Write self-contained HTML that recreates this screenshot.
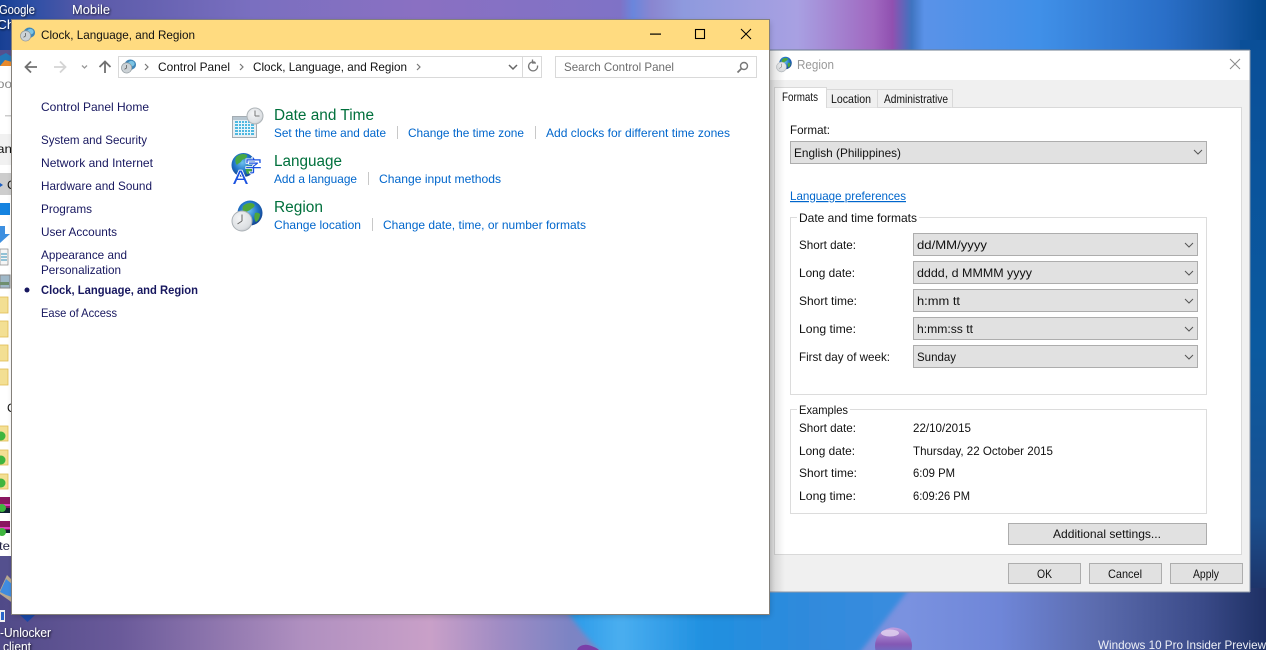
<!DOCTYPE html>
<html lang="en"><head><meta charset="utf-8"><title>Clock, Language, and Region</title>
<style>
html,body{margin:0;padding:0;width:1266px;height:650px;overflow:hidden;background:#35589f}
svg{display:block;position:absolute;left:0;top:0}
text{font-family:"Liberation Sans",Arial,sans-serif;font-size:12px;fill:#111;white-space:pre}
.n{fill:#17175f}
.l{fill:#0066cc}
.h{font-size:15.5px;fill:#00703c}
.d{fill:#fff;font-size:12.5px}
</style></head><body>
<svg width="1266" height="650" viewBox="0 0 1266 650" xmlns="http://www.w3.org/2000/svg">
<defs>
<filter id="b2" x="-20%" y="-20%" width="140%" height="140%"><feGaussianBlur stdDeviation="2.500"/></filter>
<filter id="sh" x="-5%" y="-5%" width="110%" height="110%"><feGaussianBlur stdDeviation="3"/></filter>
<filter id="ts" x="-10%" y="-30%" width="120%" height="160%"><feDropShadow dx="1" dy="1" stdDeviation="1" flood-color="#000" flood-opacity=".8"/></filter>
<linearGradient id="top" x1="0" x2="1" y1="0" y2="0">
<stop offset="0" stop-color="#173f93"/><stop offset=".025" stop-color="#2d4fa5"/><stop offset=".07" stop-color="#5a5aa8"/><stop offset=".2" stop-color="#7a6fc0"/><stop offset=".33" stop-color="#8a70c2"/><stop offset=".49" stop-color="#7f72c6"/><stop offset=".5" stop-color="#6a86dc"/><stop offset=".515" stop-color="#8a86d0"/><stop offset=".54" stop-color="#8e9ade"/><stop offset=".63" stop-color="#a8a0e2"/><stop offset=".69" stop-color="#a068c0"/><stop offset=".705" stop-color="#9050b0"/><stop offset=".72" stop-color="#3f74c0"/><stop offset=".73" stop-color="#5a92e8"/><stop offset=".82" stop-color="#4090e8"/><stop offset=".92" stop-color="#2a6fc8"/><stop offset=".965" stop-color="#1a5aa8"/><stop offset="1" stop-color="#04478c"/>
</linearGradient>
<linearGradient id="bot" x1="0" x2="1" y1="0" y2="0">
<stop offset="0" stop-color="#504a88"/><stop offset=".095" stop-color="#6a5a9a"/><stop offset=".24" stop-color="#b090c0"/><stop offset=".34" stop-color="#c9a0c8"/><stop offset=".395" stop-color="#a08cc4"/><stop offset=".45" stop-color="#7c84c4"/><stop offset=".715" stop-color="#7a92e0"/><stop offset=".79" stop-color="#6f86d8"/><stop offset=".87" stop-color="#5a6aac"/><stop offset=".95" stop-color="#3a4a88"/><stop offset="1" stop-color="#1e3064"/>
</linearGradient>
<linearGradient id="blue" gradientUnits="userSpaceOnUse" x1="570" x2="905" y1="0" y2="0">
<stop offset="0" stop-color="#2a9ae8"/><stop offset=".15" stop-color="#4aaef0"/><stop offset=".4" stop-color="#2090e0"/><stop offset=".7" stop-color="#2f8adc"/><stop offset="1" stop-color="#3a8cdf"/>
</linearGradient>
<linearGradient id="rt" x1="0" x2="0" y1="0" y2="1">
<stop offset="0" stop-color="#0a4f98"/><stop offset=".55" stop-color="#0b5aa0"/><stop offset=".85" stop-color="#1a5090"/><stop offset="1" stop-color="#1e3064"/>
</linearGradient>
<linearGradient id="fade" x1="0" x2="1" y1="0" y2="0"><stop offset="0" stop-color="#000" stop-opacity=".14"/><stop offset="1" stop-color="#000" stop-opacity="0"/></linearGradient>
<radialGradient id="glb" cx=".45" cy=".4" r=".65"><stop offset="0" stop-color="#6fc0ee"/><stop offset=".55" stop-color="#1f74c8"/><stop offset="1" stop-color="#123a86"/></radialGradient>
<radialGradient id="clk" cx=".4" cy=".35" r=".8"><stop offset="0" stop-color="#f4f5f6"/><stop offset=".7" stop-color="#dcdfe2"/><stop offset="1" stop-color="#a8aeb3"/></radialGradient>
<linearGradient id="drop" x1="0" x2="0" y1="0" y2="1"><stop offset="0" stop-color="#c0a0e0"/><stop offset=".45" stop-color="#8458b4"/><stop offset="1" stop-color="#4a8ed8"/></linearGradient>
<symbol id="cp" viewBox="0 0 16 16" overflow="visible">
<ellipse cx="10" cy="6" rx="6" ry="5.500" fill="#3f86b8"/><ellipse cx="11" cy="5" rx="3.500" ry="3" fill="#7cc4e4"/>
<circle cx="6" cy="9.500" r="5.500" fill="#ccd2d6" stroke="#8b959b" stroke-width=".7"/>
<path d="M6 9.500V6.400M6 9.500L3.800 11" stroke="#555" stroke-width=".8" fill="none"/>
</symbol>
<symbol id="reg" viewBox="0 0 32 32" overflow="visible">
<circle cx="19" cy="14" r="12.500" fill="url(#glb)"/>
<path d="M12 7c3-3 8-4 11-2 2 2-1 4-3 5-1 2-5 2-6 4-2 1-3-4-2-7zM24 14c2-1 4 0 5 1 0 4-2 7-4 8-2-2-2-6-1-9z" fill="#4fa63a"/>
<circle cx="11" cy="22" r="10" fill="url(#clk)" stroke="#aab0b5" stroke-width="1"/>
<path d="M11 22v-6.500M11 22l-4.500 3" stroke="#666" stroke-width="1" fill="none"/>
</symbol>
</defs>

<!-- wallpaper -->
<rect x="0" y="0" width="1266" height="54" fill="url(#top)"/>
<rect x="1240" y="40" width="26" height="560" fill="url(#rt)"/>
<rect x="0" y="50" width="20" height="570" fill="#54508e"/>
<rect x="0" y="588" width="1266" height="62" fill="url(#bot)"/>
<path d="M560 588H910L858 655H604Q578 630 560 600z" fill="url(#blue)" filter="url(#b2)"/>
<circle cx="893.500" cy="646" r="18.500" fill="url(#drop)"/>
<ellipse cx="890" cy="633" rx="9" ry="3.500" fill="#e0d0ee" opacity=".85"/>
<path d="M577 650c1-4 7-6 11-5 4 1 9 3 11 5z" fill="#7a3fa8"/>

<!-- desktop text and icons -->
<text class="d" x="-1" y="14" textLength="36" lengthAdjust="spacingAndGlyphs" filter="url(#ts)">Google</text>
<text class="d" x="72" y="14" textLength="38" lengthAdjust="spacingAndGlyphs" filter="url(#ts)">Mobile</text>
<text class="d" x="-3" y="29" textLength="22" lengthAdjust="spacingAndGlyphs" filter="url(#ts)">Chr</text>
<path d="M0 590L7 575l5 5v23L10 601 0 594z" fill="#b8a890"/><path d="M0 592l6-13 6 5v13l-6-2z" fill="#3f8ce0"/>
<path d="M0 610h5v12H0z" fill="#f0f0f0"/><path d="M1 612h3v8H1z" fill="#2a66c8"/>
<path d="M20 615h15l-7.500 7z" fill="#1b48a8"/>
<text class="d" x="0" y="637" textLength="51" lengthAdjust="spacingAndGlyphs" filter="url(#ts)">-Unlocker</text>
<text class="d" x="3" y="651" textLength="28" lengthAdjust="spacingAndGlyphs" filter="url(#ts)">client</text>
<text x="1098" y="649" textLength="168" lengthAdjust="spacingAndGlyphs" style="fill:#eef0f6">Windows 10 Pro Insider Preview</text>

<!-- explorer window behind -->
<rect x="0" y="66" width="12" height="490" fill="#fff"/>
<path d="M0 66V56l6-3 6 4v9z" fill="#2477b8"/><path d="M0 66l5-6 7 2v4z" fill="#e88a2c"/>
<text x="-3" y="88" style="fill:#888" textLength="15" lengthAdjust="spacingAndGlyphs">oo</text>
<rect x="5" y="115" width="7" height="1.500" fill="#ccc"/>
<rect x="0" y="134" width="12" height="31" fill="#f1f1f1"/>
<text x="-3" y="153" textLength="15" lengthAdjust="spacingAndGlyphs">an</text>
<rect x="0" y="173" width="12" height="22" fill="#cdcdcd"/>
<text x="7" y="189">C</text><path d="M0 183l3 2-3 2z" fill="#1f5fc0"/>
<path d="M0 203h10v14H0z" fill="#1583e0"/><path d="M0 215h10v2H0z" fill="#fff"/>
<path d="M0 226h5v8h5l-10 9z" fill="#3d8fe0"/>
<rect x="0" y="249" width="8" height="16" fill="#f5f5f5" stroke="#888" stroke-width=".7"/><path d="M1 254h6M1 257h6M1 260h6" stroke="#2e8fb8"/>
<rect x="0" y="275" width="10" height="13" fill="#9fb8c8" stroke="#888"/><rect x="0" y="282" width="9" height="3" fill="#6f8f6f"/>
<g fill="#f3df93" stroke="#e0bc54" stroke-width=".8">
<rect x="-2" y="297" width="10" height="16"/><rect x="-2" y="321" width="10" height="16"/><rect x="-2" y="345" width="10" height="16"/><rect x="-2" y="369" width="10" height="16"/>
<rect x="-2" y="426" width="10" height="15"/><rect x="-2" y="450" width="10" height="15"/><rect x="-2" y="474" width="10" height="15"/>
</g>
<g fill="#3fb53f"><circle cx="1" cy="436" r="4.500"/><circle cx="1" cy="460" r="4.500"/><circle cx="1" cy="483" r="4.500"/></g>
<text x="7" y="412">C</text>
<g><rect x="0" y="497" width="10" height="16" fill="#8a1660"/><rect x="0" y="504" width="10" height="2" fill="#e040c0"/><rect x="0" y="508" width="10" height="5" fill="#123"/>
<rect x="0" y="521" width="10" height="12" fill="#8a1660"/><rect x="0" y="527" width="10" height="2" fill="#e040c0"/><rect x="0" y="530" width="10" height="3" fill="#123"/>
<circle cx="2" cy="508" r="4" fill="#3fb53f"/><circle cx="2" cy="532" r="4" fill="#3fb53f"/></g>
<text x="-1" y="550" textLength="11" lengthAdjust="spacingAndGlyphs" style="fill:#224">te</text>

<!-- Region dialog -->
<rect x="769" y="50" width="481" height="542" fill="#f0f0f0"/>
<rect x="769" y="50" width="481" height="30" fill="#fff"/>
<rect x="769" y="49.500" width="481" height="1" fill="#6d7c8f"/>
<rect x="1249.500" y="50" width="1" height="542" fill="#8e98a8"/>
<rect x="769" y="591.500" width="481" height="1" fill="#8e98a8"/>
<use href="#reg" x="776" y="56" width="16" height="16"/>
<text x="797" y="69" textLength="37" lengthAdjust="spacingAndGlyphs" style="fill:#999;font-size:12.500px">Region</text>
<path d="M1230 59l10 10M1240 59l-10 10" stroke="#8a8a8a" fill="none"/>
<!-- tabs -->
<rect x="774.500" y="107.500" width="467" height="447" fill="#fff" stroke="#d9d9d9"/>
<path d="M826.500 107.500V89.500H877.500V107.500M877.500 89.500H952.500V107.500" fill="#f0f0f0" stroke="#d9d9d9"/>
<path d="M774.500 108V87.500H826.500V108" fill="#fff" stroke="#d9d9d9"/>
<rect x="775" y="106" width="51" height="3" fill="#fff"/>
<text x="782" y="101" textLength="36" lengthAdjust="spacingAndGlyphs">Formats</text>
<text x="831" y="103" textLength="40" lengthAdjust="spacingAndGlyphs">Location</text>
<text x="884" y="103" textLength="64" lengthAdjust="spacingAndGlyphs">Administrative</text>
<rect x="769" y="50" width="16" height="542" fill="url(#fade)"/>

<text x="790" y="134" textLength="40" lengthAdjust="spacingAndGlyphs">Format:</text>
<g fill="#e1e1e1" stroke="#adadad">
<rect x="790.500" y="141.500" width="416" height="22"/>
<rect x="913.500" y="233.500" width="284" height="22"/>
<rect x="913.500" y="261.500" width="284" height="22"/>
<rect x="913.500" y="289.500" width="284" height="22"/>
<rect x="913.500" y="317.500" width="284" height="22"/>
<rect x="913.500" y="345.500" width="284" height="22"/>
<rect x="1008.500" y="523.500" width="198" height="21"/>
<rect x="1008.500" y="563.500" width="72" height="20"/>
<rect x="1089.500" y="563.500" width="72" height="20"/>
<rect x="1170.500" y="563.500" width="72" height="20"/>
</g>
<g fill="none" stroke="#555" stroke-width="1">
<path d="M1194 150l4 4 4-4"/><path d="M1185 243l4 4 4-4"/><path d="M1185 271l4 4 4-4"/><path d="M1185 299l4 4 4-4"/><path d="M1185 327l4 4 4-4"/><path d="M1185 355l4 4 4-4"/>
</g>
<text x="794" y="157" textLength="107" lengthAdjust="spacingAndGlyphs">English (Philippines)</text>
<text class="l" x="790" y="200" textLength="116" lengthAdjust="spacingAndGlyphs" text-decoration="underline">Language preferences</text>

<rect x="790.500" y="217.500" width="416" height="177" fill="none" stroke="#dcdcdc"/>
<rect x="797" y="212" width="122" height="10" fill="#fff"/>
<text x="799" y="222" textLength="118" lengthAdjust="spacingAndGlyphs">Date and time formats</text>
<text x="799" y="249" textLength="57" lengthAdjust="spacingAndGlyphs">Short date:</text>
<text x="799" y="277" textLength="56" lengthAdjust="spacingAndGlyphs">Long date:</text>
<text x="799" y="305" textLength="58" lengthAdjust="spacingAndGlyphs">Short time:</text>
<text x="799" y="333" textLength="57" lengthAdjust="spacingAndGlyphs">Long time:</text>
<text x="799" y="361" textLength="91" lengthAdjust="spacingAndGlyphs">First day of week:</text>
<text x="917" y="249" textLength="70" lengthAdjust="spacingAndGlyphs">dd/MM/yyyy</text>
<text x="917" y="277" textLength="115" lengthAdjust="spacingAndGlyphs">dddd, d MMMM yyyy</text>
<text x="917" y="305" textLength="43" lengthAdjust="spacingAndGlyphs">h:mm tt</text>
<text x="917" y="333" textLength="56" lengthAdjust="spacingAndGlyphs">h:mm:ss tt</text>
<text x="917" y="361" textLength="39" lengthAdjust="spacingAndGlyphs">Sunday</text>

<rect x="790.500" y="409.500" width="416" height="104" fill="none" stroke="#dcdcdc"/>
<rect x="797" y="404" width="53" height="10" fill="#fff"/>
<text x="799" y="414" textLength="49" lengthAdjust="spacingAndGlyphs">Examples</text>
<text x="799" y="432" textLength="57" lengthAdjust="spacingAndGlyphs">Short date:</text>
<text x="799" y="455" textLength="56" lengthAdjust="spacingAndGlyphs">Long date:</text>
<text x="799" y="477" textLength="58" lengthAdjust="spacingAndGlyphs">Short time:</text>
<text x="799" y="500" textLength="57" lengthAdjust="spacingAndGlyphs">Long time:</text>
<text x="913" y="432" textLength="58" lengthAdjust="spacingAndGlyphs">22/10/2015</text>
<text x="913" y="455" textLength="140" lengthAdjust="spacingAndGlyphs">Thursday, 22 October 2015</text>
<text x="913" y="477" textLength="42" lengthAdjust="spacingAndGlyphs">6:09 PM</text>
<text x="913" y="500" textLength="57" lengthAdjust="spacingAndGlyphs">6:09:26 PM</text>
<text x="1053" y="538" textLength="108" lengthAdjust="spacingAndGlyphs">Additional settings...</text>
<text x="1037" y="578" textLength="15" lengthAdjust="spacingAndGlyphs">OK</text>
<text x="1108" y="578" textLength="34" lengthAdjust="spacingAndGlyphs">Cancel</text>
<text x="1193" y="578" textLength="26" lengthAdjust="spacingAndGlyphs">Apply</text>

<!-- Control panel window -->
<rect x="13" y="22" width="757" height="594" fill="#000" opacity=".2" filter="url(#sh)"/>
<rect x="12" y="20" width="757" height="594" fill="#fff"/>
<rect x="12" y="20" width="757" height="30" fill="#ffdb80"/>
<rect x="11.500" y="19.500" width="758" height="595" fill="none" stroke="#84807a"/>
<use href="#cp" x="20" y="27" width="15" height="15"/>
<text x="41" y="39" textLength="154" lengthAdjust="spacingAndGlyphs">Clock, Language, and Region</text>
<rect x="650" y="33.500" width="11" height="1.200" fill="#000"/>
<rect x="695.500" y="29.500" width="9" height="9" fill="none" stroke="#000" stroke-width="1.100"/>
<path d="M741 29l10 10M751 29l-10 10" stroke="#000" fill="none"/>

<!-- nav -->
<g fill="none" stroke-width="1.800">
<path d="M37 67H26M31 61.500L25.500 67l5.500 5.500" stroke="#707070"/>
<path d="M54 67h11M60 61.500l5.500 5.500-5.500 5.500" stroke="#d4d4d4"/>
<path d="M105 73V62M99.500 67l5.500-5.500 5.500 5.500" stroke="#707070"/>
</g>
<path d="M82 65.500l2.500 2.500 2.500-2.500" fill="none" stroke="#999" stroke-width="1.300"/>
<rect x="118.500" y="56.500" width="423" height="21" fill="#fff" stroke="#d9d9d9"/>
<path d="M522.500 57v20" stroke="#d9d9d9"/>
<use href="#cp" x="121" y="59" width="15" height="15"/>
<g fill="none" stroke="#777" stroke-width="1.200">
<path d="M145 64l3 3-3 3"/><path d="M240 64l3 3-3 3"/><path d="M417 64l3 3-3 3"/>
</g>
<text x="158" y="71" textLength="72" lengthAdjust="spacingAndGlyphs">Control Panel</text>
<text x="253" y="71" textLength="154" lengthAdjust="spacingAndGlyphs">Clock, Language, and Region</text>
<path d="M509 65l4 4 4-4" fill="none" stroke="#666" stroke-width="1.500"/>
<path d="M537.500 65.500a4.500 4.500 0 1 1-2.500-3.200M532.500 59.500v3.500h3.500" fill="none" stroke="#777" stroke-width="1.300"/>
<rect x="555.500" y="56.500" width="201" height="21" fill="#fff" stroke="#d9d9d9"/>
<text x="564" y="71" textLength="110" lengthAdjust="spacingAndGlyphs" style="fill:#6d6d6d">Search Control Panel</text>
<circle cx="744" cy="66" r="3.500" fill="none" stroke="#777" stroke-width="1.400"/><path d="M741.500 68.500L737.500 72.500" stroke="#777" stroke-width="1.800"/>

<!-- left nav -->
<text class="n" x="41" y="111" textLength="108" lengthAdjust="spacingAndGlyphs">Control Panel Home</text>
<text class="n" x="41" y="144" textLength="106" lengthAdjust="spacingAndGlyphs">System and Security</text>
<text class="n" x="41" y="167" textLength="112" lengthAdjust="spacingAndGlyphs">Network and Internet</text>
<text class="n" x="41" y="190" textLength="111" lengthAdjust="spacingAndGlyphs">Hardware and Sound</text>
<text class="n" x="41" y="213" textLength="51" lengthAdjust="spacingAndGlyphs">Programs</text>
<text class="n" x="41" y="236" textLength="76" lengthAdjust="spacingAndGlyphs">User Accounts</text>
<text class="n" x="41" y="259" textLength="86" lengthAdjust="spacingAndGlyphs">Appearance and</text>
<text class="n" x="41" y="274" textLength="80" lengthAdjust="spacingAndGlyphs">Personalization</text>
<circle cx="27" cy="290" r="2.500" fill="#17175f"/>
<text class="n" x="41" y="294" textLength="157" lengthAdjust="spacingAndGlyphs" style="font-weight:700">Clock, Language, and Region</text>
<text class="n" x="41" y="317" textLength="76" lengthAdjust="spacingAndGlyphs">Ease of Access</text>

<!-- date and time icon -->
<rect x="232.500" y="116.500" width="24" height="21" fill="#e8eef2" stroke="#a4acb2"/>
<rect x="233" y="117" width="23" height="3" fill="#b8c6d0"/>
<rect x="235" y="121" width="19" height="14" fill="#4fb8e0"/>
<path d="M235 123.500h19M235 126.500h19M235 129.500h19M235 132.500h19M238.500 121v14M241.500 121v14M244.500 121v14M247.500 121v14M250.500 121v14" stroke="#e8f6fb" stroke-width="1" fill="none"/>
<circle cx="255" cy="116" r="8" fill="url(#clk)" stroke="#aeb4b8"/>
<path d="M255 116v-5.500M255 116h4.500" stroke="#777" fill="none"/>
<text class="h" x="274" y="120" textLength="100" lengthAdjust="spacingAndGlyphs">Date and Time</text>
<text class="l" x="274" y="137" textLength="112" lengthAdjust="spacingAndGlyphs">Set the time and date</text>
<path d="M397.500 126v13M535.500 126v13M368.500 172v13M372.500 218v13" stroke="#c8c8c8"/>
<text class="l" x="408" y="137" textLength="116" lengthAdjust="spacingAndGlyphs">Change the time zone</text>
<text class="l" x="546" y="137" textLength="184" lengthAdjust="spacingAndGlyphs">Add clocks for different time zones</text>

<!-- language icon -->
<circle cx="243.500" cy="165" r="12" fill="url(#glb)"/>
<path d="M236 157c3-3 8-4 11-2 1 3-3 4-5 5-1 3-4 3-5 5-2-2-2-6-1-8zM246 166c2-1 5 0 7 1-1 4-3 7-6 7-1-3-2-5-1-8z" fill="#47a845"/>
<text x="233" y="184" textLength="15" lengthAdjust="spacingAndGlyphs" style="font-size:19px;fill:#1b52e0;stroke:#fff;stroke-width:1.500px;paint-order:stroke">A</text>
<text x="245" y="172" style="font-size:17px;fill:#1b52e0;stroke:#fff;stroke-width:1.500px;paint-order:stroke;font-family:'Liberation Sans','Noto Sans CJK SC',sans-serif">字</text>
<text class="h" x="274" y="166" textLength="68" lengthAdjust="spacingAndGlyphs">Language</text>
<text class="l" x="274" y="183" textLength="83" lengthAdjust="spacingAndGlyphs">Add a language</text>
<text class="l" x="379" y="183" textLength="122" lengthAdjust="spacingAndGlyphs">Change input methods</text>

<!-- region icon -->
<use href="#reg" x="231" y="199" width="32" height="32"/>
<text class="h" x="274" y="212" textLength="49" lengthAdjust="spacingAndGlyphs">Region</text>
<text class="l" x="274" y="229" textLength="87" lengthAdjust="spacingAndGlyphs">Change location</text>
<text class="l" x="383" y="229" textLength="203" lengthAdjust="spacingAndGlyphs">Change date, time, or number formats</text>
</svg>
</body></html>
